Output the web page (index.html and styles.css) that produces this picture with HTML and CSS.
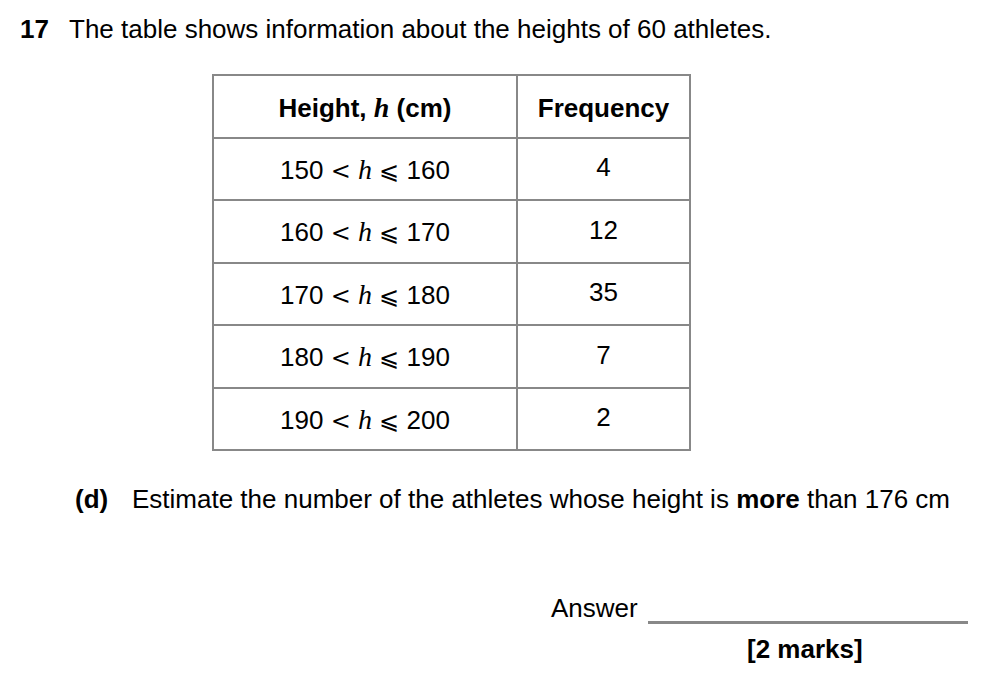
FILE: index.html
```html
<!DOCTYPE html>
<html>
<head>
<meta charset="utf-8">
<link rel="stylesheet" href="styles.css">
</head>
<body>
<div class="page">
  <div class="question">
    <span class="qnum">17</span>
    <span class="qtext">The table shows information about the heights of 60 athletes.</span>
  </div>
  <table class="data">
    <tr>
      <th class="c1">Height, <span class="var">h</span> (cm)</th>
      <th class="c2">Frequency</th>
    </tr>
    <tr><td>150 <span class="op">&lt;</span> <span class="var">h</span> <span class="op">⩽</span> 160</td><td class="f">4</td></tr>
    <tr><td>160 <span class="op">&lt;</span> <span class="var">h</span> <span class="op">⩽</span> 170</td><td class="f">12</td></tr>
    <tr><td>170 <span class="op">&lt;</span> <span class="var">h</span> <span class="op">⩽</span> 180</td><td class="f">35</td></tr>
    <tr><td>180 <span class="op">&lt;</span> <span class="var">h</span> <span class="op">⩽</span> 190</td><td class="f">7</td></tr>
    <tr><td>190 <span class="op">&lt;</span> <span class="var">h</span> <span class="op">⩽</span> 200</td><td class="f">2</td></tr>
  </table>
  <div class="part">
    <span class="plabel">(d)</span>
    <span class="ptext">Estimate the number of the athletes whose height is <b>more</b> than 176 cm</span>
  </div>
  <div class="answer">
    <span class="alabel">Answer</span>
    <span class="aline"></span>
  </div>
  <div class="marks">[2 marks]</div>
</div>
</body>
</html>
```

FILE: styles.css
```css
html, body {
  margin: 0;
  padding: 0;
  background: #ffffff;
}
body {
  font-family: "Liberation Sans", Arial, sans-serif;
  color: #000;
  font-size: 26px;
}
.page {
  width: 1000px;
  height: 680px;
  position: relative;
  overflow: hidden;
}
.question {
  display: flex;
  padding: 14px 0 0 20px;
  line-height: 30px;
}
.qnum {
  font-weight: bold;
  width: 49px;
}
.data {
  border-collapse: collapse;
  margin: 30px 0 0 212px;
}
.data th, .data td {
  border: 2px solid #888888;
  text-align: center;
  height: 62.5px;
  padding: 0;
  font-size: 26px;
  line-height: 30px;
  box-sizing: border-box;
}
.data th {
  font-weight: bold;
  padding-top: 3px;
}
.c1 { width: 304px; }
.c2 { width: 173px; }
.data td {
  padding-top: 2px;
}
.data td.f {
  padding-top: 0;
  padding-bottom: 3px;
}
.var {
  font-family: "Liberation Serif", "Times New Roman", serif;
  font-style: italic;
  font-size: 28px;
  line-height: 0;
}
.op {
  font-family: "DejaVu Serif", "Liberation Serif", serif;
  font-size: 24px;
  line-height: 0;
}
.part {
  display: flex;
  padding: 33px 0 0 75px;
  line-height: 30px;
}
.plabel {
  font-weight: bold;
  width: 57px;
}
.answer {
  display: flex;
  align-items: flex-end;
  padding: 79px 0 0 551px;
  line-height: 30px;
}
.alabel {
  width: 97px;
}
.aline {
  display: block;
  width: 320px;
  border-bottom: 3px solid #888888;
  margin-bottom: -1px;
}
.marks {
  font-weight: bold;
  padding: 11px 0 0 747px;
  line-height: 30px;
}
```
